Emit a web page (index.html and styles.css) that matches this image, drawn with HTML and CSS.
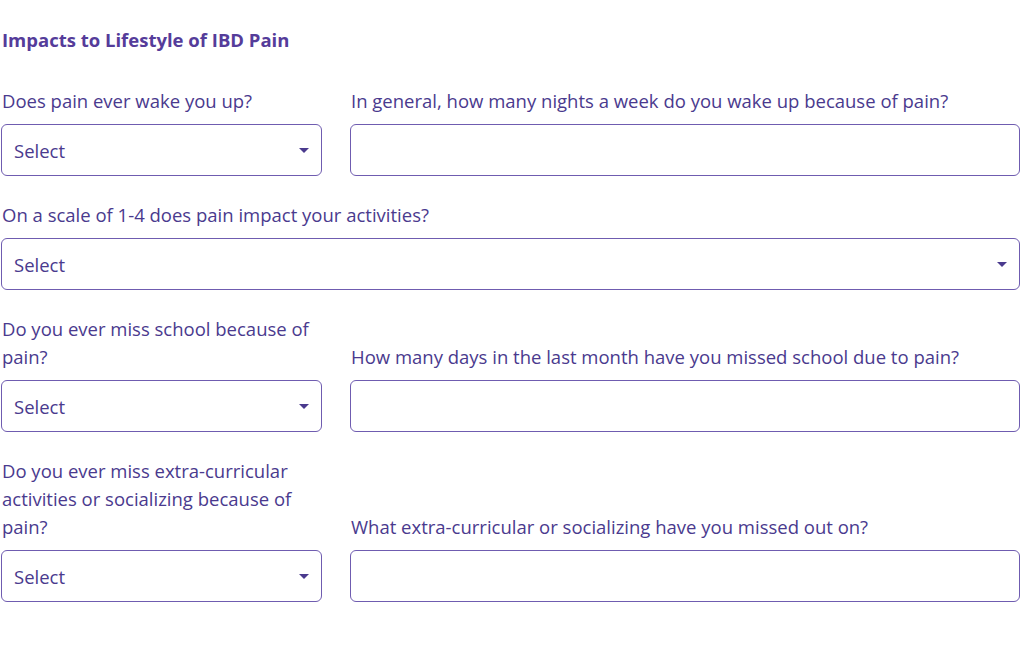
FILE: index.html
```html
<!DOCTYPE html>
<html lang="en">
<head>
  <meta charset="UTF-8">
  <meta name="viewport" content="width=device-width, initial-scale=1.0">
  <title>Impacts to Lifestyle of IBD Pain</title>
  <link rel="stylesheet" href="styles.css">
</head>
<body>
  <form class="pain-form">
    <h2 class="section-title">Impacts to Lifestyle of IBD Pain</h2>

    <div class="row">
      <div class="field">
        <label class="field-label">Does pain ever wake you up?</label>
        <div class="select-box"><span>Select</span><span class="caret"></span></div>
      </div>
      <div class="field">
        <label class="field-label">In general, how many nights a week do you wake up because of pain?</label>
        <input class="text-box" type="text">
      </div>
    </div>

    <div class="row row-single">
      <div class="field">
        <label class="field-label">On a scale of 1-4 does pain impact your activities?</label>
        <div class="select-box"><span>Select</span><span class="caret"></span></div>
      </div>
    </div>

    <div class="row">
      <div class="field">
        <label class="field-label">Do you ever miss school because of pain?</label>
        <div class="select-box"><span>Select</span><span class="caret"></span></div>
      </div>
      <div class="field">
        <label class="field-label">How many days in the last month have you missed school due to pain?</label>
        <input class="text-box" type="text">
      </div>
    </div>

    <div class="row">
      <div class="field">
        <label class="field-label">Do you ever miss extra-curricular activities or socializing because of pain?</label>
        <div class="select-box"><span>Select</span><span class="caret"></span></div>
      </div>
      <div class="field">
        <label class="field-label">What extra-curricular or socializing have you missed out on?</label>
        <input class="text-box" type="text">
      </div>
    </div>
  </form>
</body>
</html>
```

FILE: styles.css
```css
body {
  margin: 0;
  background: #fff;
  font-family: "Open Sans", "Noto Sans", sans-serif;
  color: #4a3a8e;
}
.pain-form {
  margin: 0 4px 0 1px;
  padding-top: 27px;
}
.section-title {
  margin: 0 0 34px 1px;
  font-size: 18.5px;
  line-height: 26px;
  font-weight: 700;
  color: #553c9a;
}
.row {
  display: grid;
  grid-template-columns: 321px 1fr;
  column-gap: 28px;
  align-items: end;
  margin-bottom: 25px;
}
.row-single {
  grid-template-columns: 1fr;
}
.field {
  display: flex;
  flex-direction: column;
  justify-content: flex-end;
}
.field-label {
  font-size: 18.5px;
  line-height: 28px;
  margin: 0 0 9px 1px;
}
.select-box,
.text-box {
  box-sizing: border-box;
  height: 52px;
  width: 100%;
  border: 1.5px solid #6f5cb0;
  border-radius: 6px;
  background: #fff;
}
.select-box {
  display: flex;
  align-items: center;
  justify-content: space-between;
  padding: 0 12px;
  font-size: 18.5px;
  color: #4a3a8e;
}
.caret {
  width: 0;
  height: 0;
  border-left: 5px solid transparent;
  border-right: 5px solid transparent;
  border-top: 5px solid #4a3a8e;
}
.text-box {
  font: inherit;
  padding: 0 12px;
}
```
